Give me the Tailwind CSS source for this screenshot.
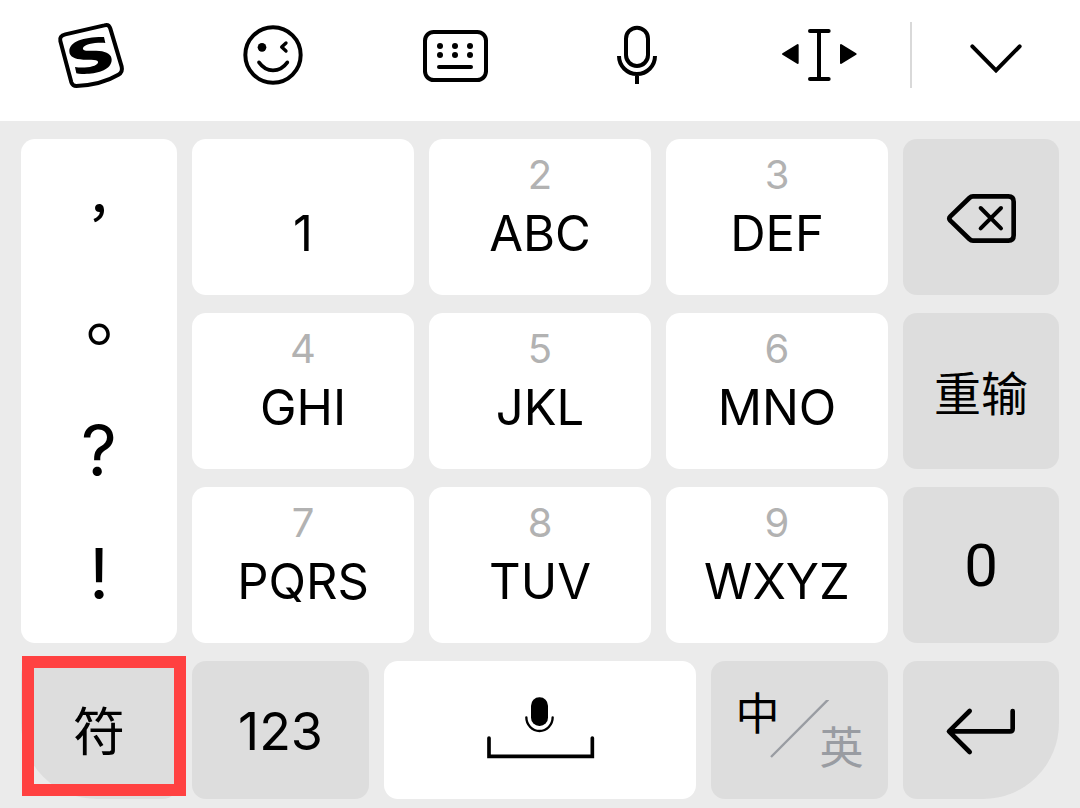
<!DOCTYPE html>
<html lang="zh-CN">
  <head>
    <meta charset="UTF-8" />
    <meta name="viewport" content="width=device-width, initial-scale=1.0" />
    <title>九宫格键盘</title>
    <script src="https://cdn.jsdelivr.net/npm/@tailwindcss/browser@4"></script>
  </head>
  <body class="min-h-screen bg-[#ebebeb] text-black font-['Inter','Noto_Sans_CJK_SC',sans-serif]">
    <!-- Toolbar -->
    <header class="flex h-[121px] items-center bg-white pb-[11px]">
      <button class="flex flex-[182] justify-center" aria-label="搜狗">
        <svg class="size-20" viewBox="33 15 240 240" fill="none">
          <path d="M76 73 L193 46 Q207 42 211 56 L245 170 Q249 186 235 194 Q185 224 109 228 Q98 228 94 217 L61 93 Q57 78 76 73Z" stroke="currentColor" stroke-width="12" stroke-linejoin="round" />
          <path d="M192 81 L196 99 C168 97 133 102 129 114 C126 126 153 121 178 123 C201 125 215 134 215 149 C215 178 176 190 141 191 C128 192 117 192 109 190 L105 171 C132 176 170 170 174 158 C177 147 153 150 130 149 C104 148 88 140 88 124 C88 94 133 80 192 81Z" fill="currentColor" />
        </svg>
      </button>
      <button class="flex flex-[182] justify-center" aria-label="表情">
        <svg class="size-20" viewBox="579 15 240 240" fill="none" stroke="currentColor" stroke-linecap="round" stroke-linejoin="round">
          <circle cx="699" cy="135" r="83" stroke-width="12" />
          <circle cx="666" cy="112" r="13" fill="currentColor" stroke="none" />
          <path d="M738 99 L725 111 L738 123" stroke-width="10" />
          <path d="M657 157 Q674 181 699 181 Q725 181 742 157" stroke-width="11" />
        </svg>
      </button>
      <button class="flex flex-[182] justify-center" aria-label="键盘">
        <svg class="size-20" viewBox="45 15 240 240" fill="none" stroke="currentColor" stroke-width="12">
          <rect x="75" y="66" width="183" height="144" rx="26" />
          <g fill="currentColor" stroke="none">
            <circle cx="120" cy="108" r="9" />
            <circle cx="165" cy="108" r="9" />
            <circle cx="210" cy="108" r="9" />
            <circle cx="120" cy="135" r="9" />
            <circle cx="165" cy="135" r="9" />
            <circle cx="210" cy="135" r="9" />
          </g>
          <path d="M117 171 H213" stroke-linecap="round" />
        </svg>
      </button>
      <button class="flex flex-[182] justify-center" aria-label="语音">
        <svg class="size-20" viewBox="591 15 240 240" fill="none" stroke="currentColor" stroke-width="12">
          <rect x="678" y="53" width="66" height="115" rx="33" />
          <path d="M657 138 A54 54 0 0 0 765 138 M711 192 V222" />
        </svg>
      </button>
      <button class="flex flex-[182] justify-center" aria-label="移动光标">
        <svg class="size-20" viewBox="57 15 240 240" fill="none" stroke="currentColor" stroke-linecap="round" stroke-linejoin="round">
          <path d="M150 63 H206 M150 207 H206 M177 63 V207" stroke-width="12" />
          <path d="M69 132 L113 105 V159Z M287 132 L243 105 V159Z" fill="currentColor" stroke-width="6" />
        </svg>
      </button>
      <div class="h-[66px] w-0.5 bg-[#d9d9d9]"></div>
      <button class="flex flex-[168] justify-center" aria-label="收起键盘">
        <svg class="size-20" viewBox="588 15 240 240" fill="none" stroke="currentColor" stroke-width="12" stroke-linecap="round">
          <path d="M637 109 L708 181 L779 109" />
        </svg>
      </button>
    </header>

    <main class="px-[21px] pt-[18px] pb-[9px]">
      <div class="grid grid-cols-[156fr_222fr_222fr_222fr_156fr] grid-rows-[156px_156px_156px] gap-x-[15px] gap-y-[18px]">
        <!-- Punctuation strip -->
        <div class="row-span-3 grid grid-rows-4 rounded-[14px] bg-white py-1.5 text-[70px] leading-none font-['Inter','Noto_Sans_CJK_TC',sans-serif]">
          <button class="pt-3 text-[50px] font-medium">，</button>
          <button class="pt-3">。</button>
          <button class="pb-1">?</button>
          <button class="pb-1">!</button>
        </div>
        <button class="flex flex-col items-center gap-3.5 rounded-[14px] bg-white pt-4">
          <span class="h-10"></span>
          <span class="text-[49px] leading-none">1</span>
        </button>
        <button class="flex flex-col items-center gap-3.5 rounded-[14px] bg-white pt-4">
          <span class="text-[40px] leading-none text-[#b2b2b2]">2</span>
          <span class="text-[49px] leading-none">ABC</span>
        </button>
        <button class="flex flex-col items-center gap-3.5 rounded-[14px] bg-white pt-4">
          <span class="text-[40px] leading-none text-[#b2b2b2]">3</span>
          <span class="text-[49px] leading-none">DEF</span>
        </button>
        <button class="flex items-center justify-center rounded-[14px] bg-[#ddd]" aria-label="删除">
          <svg class="size-20" viewBox="153 141 240 240" fill="none" stroke="currentColor" stroke-linecap="round" stroke-linejoin="round">
            <path d="M249 199 H355 Q371 199 371 215 V316 Q371 332 355 332 H249 Q243 332 238 327 L181 272 Q175 265 181 259 L238 204 Q243 199 249 199Z" stroke-width="14" />
            <path d="M272 234 L333 295 M333 234 L272 295" stroke-width="12" />
          </svg>
        </button>

        <button class="flex flex-col items-center gap-3.5 rounded-[14px] bg-white pt-4">
          <span class="text-[40px] leading-none text-[#b2b2b2]">4</span>
          <span class="text-[49px] leading-none">GHI</span>
        </button>
        <button class="flex flex-col items-center gap-3.5 rounded-[14px] bg-white pt-4">
          <span class="text-[40px] leading-none text-[#b2b2b2]">5</span>
          <span class="text-[49px] leading-none">JKL</span>
        </button>
        <button class="flex flex-col items-center gap-3.5 rounded-[14px] bg-white pt-4">
          <span class="text-[40px] leading-none text-[#b2b2b2]">6</span>
          <span class="text-[49px] leading-none">MNO</span>
        </button>
        <button class="rounded-[14px] bg-[#ddd] pt-1.5 text-[47px]">重输</button>

        <button class="flex flex-col items-center gap-3.5 rounded-[14px] bg-white pt-4">
          <span class="text-[40px] leading-none text-[#b2b2b2]">7</span>
          <span class="text-[49px] leading-none">PQRS</span>
        </button>
        <button class="flex flex-col items-center gap-3.5 rounded-[14px] bg-white pt-4">
          <span class="text-[40px] leading-none text-[#b2b2b2]">8</span>
          <span class="text-[49px] leading-none">TUV</span>
        </button>
        <button class="flex flex-col items-center gap-3.5 rounded-[14px] bg-white pt-4">
          <span class="text-[40px] leading-none text-[#b2b2b2]">9</span>
          <span class="text-[49px] leading-none">WXYZ</span>
        </button>
        <button class="rounded-[14px] bg-[#ddd] pt-0.5 text-[60px] font-['Roboto',sans-serif]">0</button>
      </div>

      <!-- Bottom row -->
      <div class="mt-[18px] grid h-[138px] grid-cols-[156fr_177fr_312fr_177fr_156fr] gap-x-[15px]">
        <button class="relative rounded-[14px] rounded-bl-[76px] bg-[#ddd] pt-1.5 text-[52px]">
          符
          <span class="absolute -top-[5px] -right-[9px] bottom-[3px] left-px border-12 border-[#ff4141]"></span>
        </button>
        <button class="rounded-[14px] bg-[#ddd] pt-1 text-[52px]">123</button>
        <button class="flex items-center justify-center rounded-[14px] bg-white" aria-label="空格">
          <svg class="h-20 w-[120px]" viewBox="330 150 360 240" fill="none" stroke="currentColor">
            <rect x="483" y="172" width="51" height="86" rx="25" fill="currentColor" stroke="none" />
            <path d="M469 232 A39.5 41 0 0 0 548 232" stroke-width="7" stroke-linecap="round" />
            <path d="M357 294 V349 H667 V294" stroke-width="11" stroke-linecap="round" />
          </svg>
        </button>
        <button class="flex items-center justify-center rounded-[14px] bg-[#ddd] text-[44px] leading-none">
          <span class="-mt-8">中</span>
          <svg class="-mx-2.5 size-[60px]" viewBox="207 181 180 180" fill="none">
            <path d="M210 352 L382 179" stroke="#999ca2" stroke-width="7" />
          </svg>
          <span class="mt-9 text-[#999ca2]">英</span>
        </button>
        <button class="flex items-center justify-center rounded-[14px] rounded-br-[76px] bg-[#ddd]" aria-label="换行">
          <svg class="size-20" viewBox="723 150 240 240" fill="none" stroke="currentColor" stroke-width="14" stroke-linecap="round" stroke-linejoin="round">
            <path d="M809 213 L747 274 L809 336 M750 274 H930 Q938 274 938 266 V213" />
          </svg>
        </button>
      </div>
    </main>
  </body>
</html>
